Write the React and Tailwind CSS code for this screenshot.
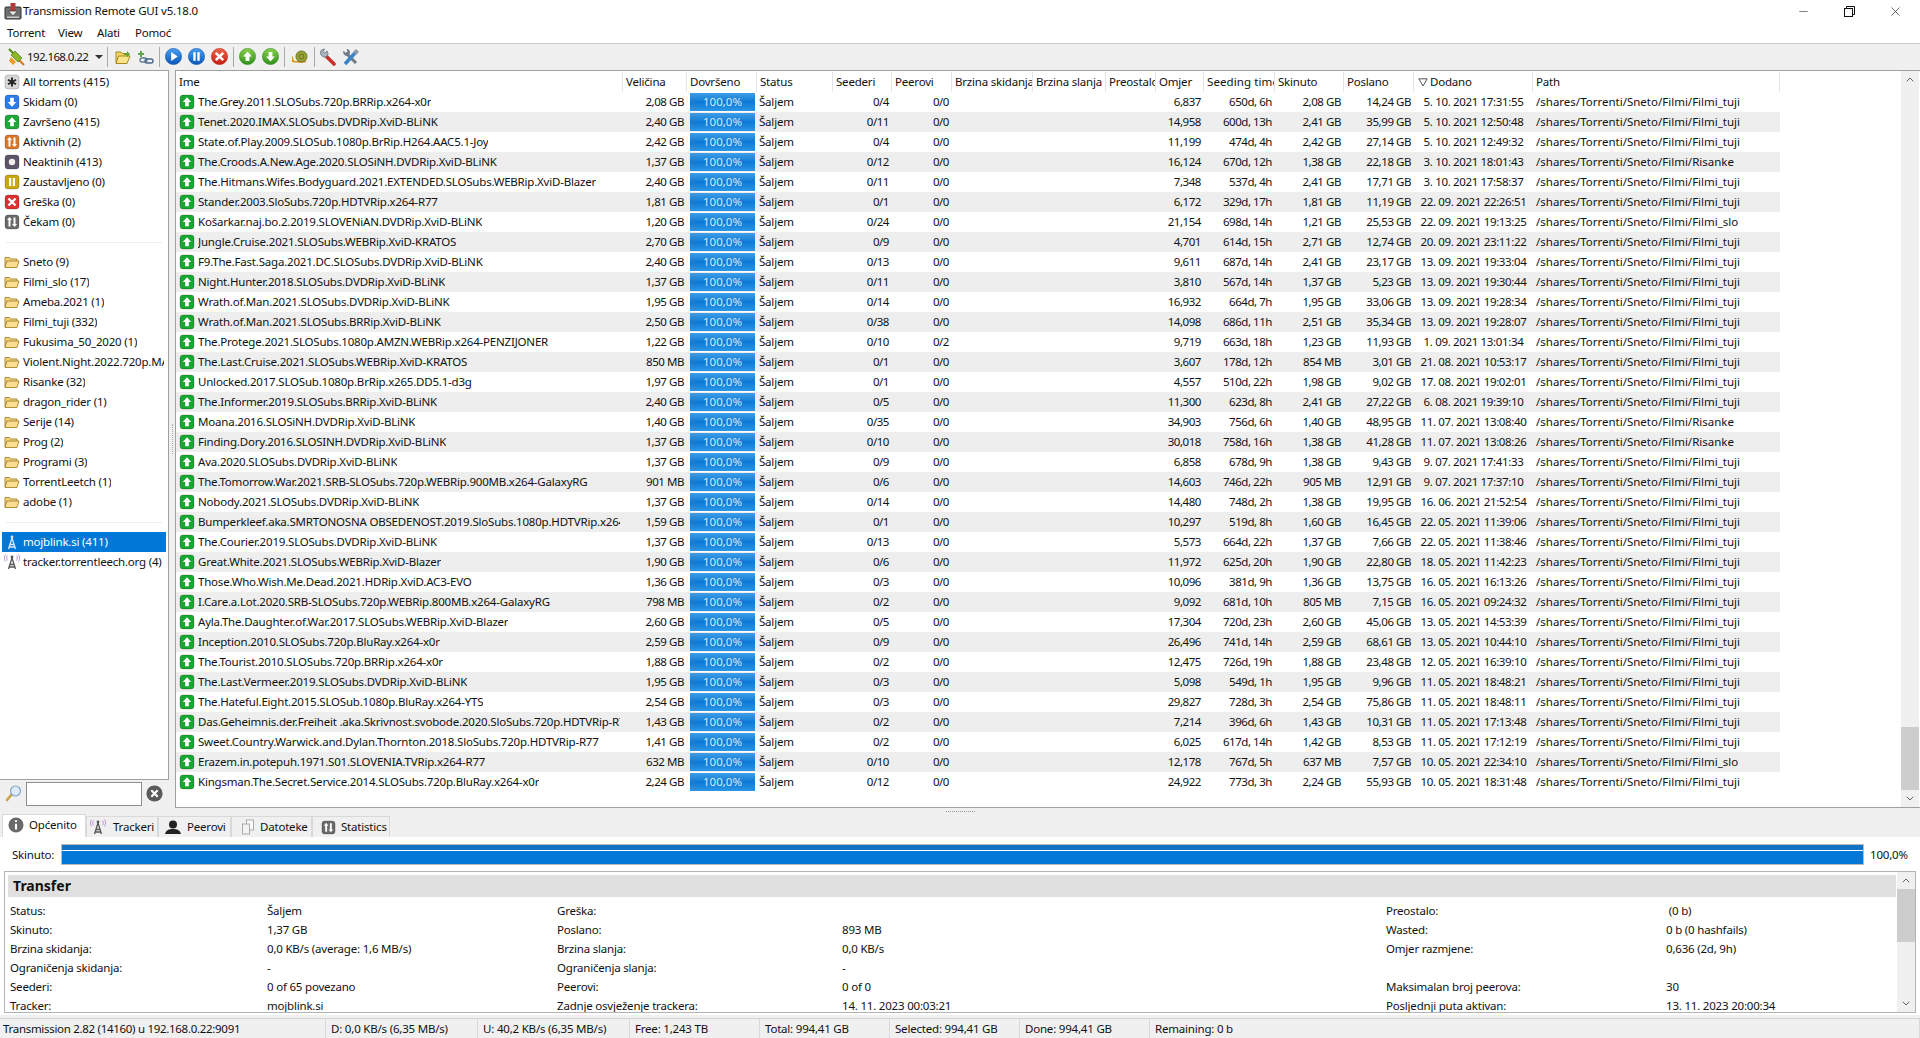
import { Minus, X, ChevronUp, ChevronDown } from "lucide-react";

const T = "/shares/Torrenti/Sneto/Filmi/Filmi_tuji";
const R = "/shares/Torrenti/Sneto/Filmi/Risanke";
const S = "/shares/Torrenti/Sneto/Filmi/Filmi_slo";

const torrents = [
    ["The.Grey.2011.SLOSubs.720p.BRRip.x264-x0r", "2,08 GB", "0/4", "0/0", "6,837", "650d, 6h", "2,08 GB", "14,24 GB", "5. 10. 2021 17:31:55", T],
    ["Tenet.2020.IMAX.SLOSubs.DVDRip.XviD-BLiNK", "2,40 GB", "0/11", "0/0", "14,958", "600d, 13h", "2,41 GB", "35,99 GB", "5. 10. 2021 12:50:48", T],
    ["State.of.Play.2009.SLOSub.1080p.BrRip.H264.AAC5.1-Joy", "2,42 GB", "0/4", "0/0", "11,199", "474d, 4h", "2,42 GB", "27,14 GB", "5. 10. 2021 12:49:32", T],
    ["The.Croods.A.New.Age.2020.SLOSiNH.DVDRip.XviD-BLiNK", "1,37 GB", "0/12", "0/0", "16,124", "670d, 12h", "1,38 GB", "22,18 GB", "3. 10. 2021 18:01:43", R],
    ["The.Hitmans.Wifes.Bodyguard.2021.EXTENDED.SLOSubs.WEBRip.XviD-Blazer", "2,40 GB", "0/11", "0/0", "7,348", "537d, 4h", "2,41 GB", "17,71 GB", "3. 10. 2021 17:58:37", T],
    ["Stander.2003.SloSubs.720p.HDTVRip.x264-R77", "1,81 GB", "0/1", "0/0", "6,172", "329d, 17h", "1,81 GB", "11,19 GB", "22. 09. 2021 22:26:51", T],
    ["Košarkar.naj.bo.2.2019.SLOVENiAN.DVDRip.XviD-BLiNK", "1,20 GB", "0/24", "0/0", "21,154", "698d, 14h", "1,21 GB", "25,53 GB", "22. 09. 2021 19:13:25", S],
    ["Jungle.Cruise.2021.SLOSubs.WEBRip.XviD-KRATOS", "2,70 GB", "0/9", "0/0", "4,701", "614d, 15h", "2,71 GB", "12,74 GB", "20. 09. 2021 23:11:22", T],
    ["F9.The.Fast.Saga.2021.DC.SLOSubs.DVDRip.XviD-BLiNK", "2,40 GB", "0/13", "0/0", "9,611", "687d, 14h", "2,41 GB", "23,17 GB", "13. 09. 2021 19:33:04", T],
    ["Night.Hunter.2018.SLOSubs.DVDRip.XviD-BLiNK", "1,37 GB", "0/11", "0/0", "3,810", "567d, 14h", "1,37 GB", "5,23 GB", "13. 09. 2021 19:30:44", T],
    ["Wrath.of.Man.2021.SLOSubs.DVDRip.XviD-BLiNK", "1,95 GB", "0/14", "0/0", "16,932", "664d, 7h", "1,95 GB", "33,06 GB", "13. 09. 2021 19:28:34", T],
    ["Wrath.of.Man.2021.SLOSubs.BRRip.XviD-BLiNK", "2,50 GB", "0/38", "0/0", "14,098", "686d, 11h", "2,51 GB", "35,34 GB", "13. 09. 2021 19:28:07", T],
    ["The.Protege.2021.SLOSubs.1080p.AMZN.WEBRip.x264-PENZIJONER", "1,22 GB", "0/10", "0/2", "9,719", "663d, 18h", "1,23 GB", "11,93 GB", "1. 09. 2021 13:01:34", T],
    ["The.Last.Cruise.2021.SLOSubs.WEBRip.XviD-KRATOS", "850 MB", "0/1", "0/0", "3,607", "178d, 12h", "854 MB", "3,01 GB", "21. 08. 2021 10:53:17", T],
    ["Unlocked.2017.SLOSub.1080p.BrRip.x265.DD5.1-d3g", "1,97 GB", "0/1", "0/0", "4,557", "510d, 22h", "1,98 GB", "9,02 GB", "17. 08. 2021 19:02:01", T],
    ["The.Informer.2019.SLOSubs.BRRip.XviD-BLiNK", "2,40 GB", "0/5", "0/0", "11,300", "623d, 8h", "2,41 GB", "27,22 GB", "6. 08. 2021 19:39:10", T],
    ["Moana.2016.SLOSiNH.DVDRip.XviD-BLiNK", "1,40 GB", "0/35", "0/0", "34,903", "756d, 6h", "1,40 GB", "48,95 GB", "11. 07. 2021 13:08:40", R],
    ["Finding.Dory.2016.SLOSINH.DVDRip.XviD-BLiNK", "1,37 GB", "0/10", "0/0", "30,018", "758d, 16h", "1,38 GB", "41,28 GB", "11. 07. 2021 13:08:26", R],
    ["Ava.2020.SLOSubs.DVDRip.XviD-BLiNK", "1,37 GB", "0/9", "0/0", "6,858", "678d, 9h", "1,38 GB", "9,43 GB", "9. 07. 2021 17:41:33", T],
    ["The.Tomorrow.War.2021.SRB-SLOSubs.720p.WEBRip.900MB.x264-GalaxyRG", "901 MB", "0/6", "0/0", "14,603", "746d, 22h", "905 MB", "12,91 GB", "9. 07. 2021 17:37:10", T],
    ["Nobody.2021.SLOSubs.DVDRip.XviD-BLiNK", "1,37 GB", "0/14", "0/0", "14,480", "748d, 2h", "1,38 GB", "19,95 GB", "16. 06. 2021 21:52:54", T],
    ["Bumperkleef.aka.SMRTONOSNA OBSEDENOST.2019.SloSubs.1080p.HDTVRip.x264-R77", "1,59 GB", "0/1", "0/0", "10,297", "519d, 8h", "1,60 GB", "16,45 GB", "22. 05. 2021 11:39:06", T],
    ["The.Courier.2019.SLOSubs.DVDRip.XviD-BLiNK", "1,37 GB", "0/13", "0/0", "5,573", "664d, 22h", "1,37 GB", "7,66 GB", "22. 05. 2021 11:38:46", T],
    ["Great.White.2021.SLOSubs.WEBRip.XviD-Blazer", "1,90 GB", "0/6", "0/0", "11,972", "625d, 20h", "1,90 GB", "22,80 GB", "18. 05. 2021 11:42:23", T],
    ["Those.Who.Wish.Me.Dead.2021.HDRip.XviD.AC3-EVO", "1,36 GB", "0/3", "0/0", "10,096", "381d, 9h", "1,36 GB", "13,75 GB", "16. 05. 2021 16:13:26", T],
    ["I.Care.a.Lot.2020.SRB-SLOSubs.720p.WEBRip.800MB.x264-GalaxyRG", "798 MB", "0/2", "0/0", "9,092", "681d, 10h", "805 MB", "7,15 GB", "16. 05. 2021 09:24:32", T],
    ["Ayla.The.Daughter.of.War.2017.SLOSubs.WEBRip.XviD-Blazer", "2,60 GB", "0/5", "0/0", "17,304", "720d, 23h", "2,60 GB", "45,06 GB", "13. 05. 2021 14:53:39", T],
    ["Inception.2010.SLOSubs.720p.BluRay.x264-x0r", "2,59 GB", "0/9", "0/0", "26,496", "741d, 14h", "2,59 GB", "68,61 GB", "13. 05. 2021 10:44:10", T],
    ["The.Tourist.2010.SLOSubs.720p.BRRip.x264-x0r", "1,88 GB", "0/2", "0/0", "12,475", "726d, 19h", "1,88 GB", "23,48 GB", "12. 05. 2021 16:39:10", T],
    ["The.Last.Vermeer.2019.SLOSubs.DVDRip.XviD-BLiNK", "1,95 GB", "0/3", "0/0", "5,098", "549d, 1h", "1,95 GB", "9,96 GB", "11. 05. 2021 18:48:21", T],
    ["The.Hateful.Eight.2015.SLOSub.1080p.BluRay.x264-YTS", "2,54 GB", "0/3", "0/0", "29,827", "728d, 3h", "2,54 GB", "75,86 GB", "11. 05. 2021 18:48:11", T],
    ["Das.Geheimnis.der.Freiheit .aka.Skrivnost.svobode.2020.SloSubs.720p.HDTVRip-R77", "1,43 GB", "0/2", "0/0", "7,214", "396d, 6h", "1,43 GB", "10,31 GB", "11. 05. 2021 17:13:48", T],
    ["Sweet.Country.Warwick.and.Dylan.Thornton.2018.SloSubs.720p.HDTVRip-R77", "1,41 GB", "0/2", "0/0", "6,025", "617d, 14h", "1,42 GB", "8,53 GB", "11. 05. 2021 17:12:19", T],
    ["Erazem.in.potepuh.1971.S01.SLOVENIA.TVRip.x264-R77", "632 MB", "0/10", "0/0", "12,178", "767d, 5h", "637 MB", "7,57 GB", "10. 05. 2021 22:34:10", S],
    ["Kingsman.The.Secret.Service.2014.SLOSubs.720p.BluRay.x264-x0r", "2,24 GB", "0/12", "0/0", "24,922", "773d, 3h", "2,24 GB", "55,93 GB", "10. 05. 2021 18:31:48", T],
];

const columns = [
    ["Ime", "w-[447px]"],
    ["Veličina", "w-[64px]"],
    ["Dovršeno", "w-[70px]"],
    ["Status", "w-[76px]"],
    ["Seederi", "w-[59px]"],
    ["Peerovi", "w-[60px]"],
    ["Brzina skidanja", "w-[81px]"],
    ["Brzina slanja", "w-[73px]"],
    ["Preostalo", "w-[50px]"],
    ["Omjer", "w-[48px]"],
    ["Seeding time", "w-[71px] tracking-[0.1px]"],
    ["Skinuto", "w-[69px]"],
    ["Poslano", "w-[70px]"],
    ["Dodano", "w-[119px]"],
    ["Path", "w-[247px]"],
];

const states = [
    ["All torrents (415)", "#d8d8d8", "all"],
    ["Skidam (0)", "#2b7de9", "down"],
    ["Završeno (415)", "#1fa83a", "up"],
    ["Aktivnih (2)", "#d9772b", "both"],
    ["Neaktinih (413)", "#5c5468", "dot"],
    ["Zaustavljeno (0)", "#c9a80e", "pause"],
    ["Greška (0)", "#dd3030", "x"],
    ["Čekam (0)", "#6a6a6a", "both"],
];

const folders = ["Sneto (9)", "Filmi_slo (17)", "Ameba.2021 (1)", "Filmi_tuji (332)", "Fukusima_50_2020 (1)", "Violent.Night.2022.720p.MAX.WEB-DL (1)", "Risanke (32)", "dragon_rider (1)", "Serije (14)", "Prog (2)", "Programi (3)", "TorrentLeetch (1)", "adobe (1)"];

const details = [
    ["Status:", "Šaljem", "Greška:", "", "Preostalo:", " (0 b)"],
    ["Skinuto:", "1,37 GB", "Poslano:", "893 MB", "Wasted:", "0 b (0 hashfails)"],
    ["Brzina skidanja:", "0,0 KB/s (average: 1,6 MB/s)", "Brzina slanja:", "0,0 KB/s", "Omjer razmjene:", "0,636 (2d, 9h)"],
    ["Ograničenja skidanja:", "-", "Ograničenja slanja:", "-", "", ""],
    ["Seederi:", "0 of 65 povezano", "Peerovi:", "0 of 0", "Maksimalan broj peerova:", "30"],
    ["Tracker:", "mojblink.si", "Zadnje osvježenje trackera:", "14. 11. 2023 00:03:21", "Posljednji puta aktivan:", "13. 11. 2023 20:00:34"],
];

const statusCells = [
    ["Transmission 2.82 (14160) u 192.168.0.22:9091", "w-[326px] pl-[3px] tracking-[-0.3px]"],
    ["D: 0,0 KB/s (6,35 MB/s)", "w-[152px] pl-[5px]"],
    ["U: 40,2 KB/s (6,35 MB/s)", "w-[152px] pl-[5px]"],
    ["Free: 1,243 TB", "w-[130px] pl-[5px]"],
    ["Total: 994,41 GB", "w-[130px] pl-[5px]"],
    ["Selected: 994,41 GB", "w-[130px] pl-[5px]"],
    ["Done: 994,41 GB", "w-[130px] pl-[5px]"],
    ["Remaining: 0 b", "flex-1 pl-[5px]"],
];

function Glyph({ kind }) {
    if (kind === "up") return <path d="M8 3.2 12.2 8H9.8v4.2H6.2V8H3.8z" fill="#fff" />;
    if (kind === "down") return <path d="M8 12.8 3.8 8h2.4V3.8h3.6V8h2.4z" fill="#fff" />;
    if (kind === "both") return <path d="M5.5 3 8 6H6.5v6.5h-2V6H3zM10.5 13 8 10h1.5V3.5h2V10H13z" fill="#fff" />;
    if (kind === "dot") return <circle cx="8" cy="8" r="3.2" fill="#eee" />;
    if (kind === "pause") return <path d="M5 4h2.2v8H5zM8.8 4H11v8H8.8z" fill="#fff" />;
    if (kind === "x") return <path d="M4.5 4.5 11.5 11.5M11.5 4.5 4.5 11.5" stroke="#fff" strokeWidth="2.4" />;
    return <path d="M8 3.5v9M4 5.7l8 4.6M12 5.7l-8 4.6" stroke="#222" strokeWidth="1.9" />;
}

function StateIcon({ color, kind, size = 16 }) {
    return (
        <svg width={size} height={size} viewBox="0 0 16 16" className="shrink-0">
            <rect x="1" y="1" width="14" height="14" rx="3" fill={color} stroke="#00000030" />
            <Glyph kind={kind} />
        </svg>
    );
}

function RoundIcon({ color, dark, kind }) {
    const id = "g" + color.slice(1);
    return (
        <svg width="17" height="17" viewBox="0 0 16 16" className="shrink-0">
            <defs>
                <linearGradient id={id} x1="0" y1="0" x2="0" y2="1">
                    <stop offset="0" stopColor={color} />
                    <stop offset="1" stopColor={dark} />
                </linearGradient>
            </defs>
            <circle cx="8" cy="8" r="7.6" fill={`url(#${id})`} stroke={dark} strokeWidth="0.6" />
            {kind === "play" && <path d="M5.8 3.8 12 8l-6.2 4.2z" fill="#fff" />}
            {kind !== "play" && <Glyph kind={kind} />}
        </svg>
    );
}

function Folder() {
    return (
        <svg width="16" height="14" viewBox="0 0 16 14" className="shrink-0">
            <path d="M1 12V2.5h4.5l1.2 1.5H13v2" fill="#f3d27c" stroke="#a5842f" strokeWidth="0.9" />
            <path d="M1 12.5 3 6h12l-2 6.5z" fill="#fadf92" stroke="#a5842f" strokeWidth="0.9" strokeLinejoin="round" />
        </svg>
    );
}

function Tower({ dark, waves }) {
    const c = dark ? "#d8e6f5" : "#555";
    return (
        <svg width="16" height="16" viewBox="0 0 16 16" className="shrink-0">
            <path d="M8 4 4.5 15M8 4l3.5 11M6 10.5h4M5.2 13h5.6" stroke={c} strokeWidth="1.3" fill="none" />
            <circle cx="8" cy="3" r="1.4" fill={c} />
            {waves && <path d="M3.5 1.5C2.5 3 2.5 5 3.5 6.5M12.5 1.5c1 1.5 1 3.5 0 5M1.5 .5C0 2.5 0 5.5 1.5 7.5M14.5 .5c1.5 2 1.5 5 0 7" stroke="#b48ad0" fill="none" strokeWidth="0.9" />}
        </svg>
    );
}

function AppIcon() {
    return (
        <svg width="18" height="18" viewBox="0 0 18 18" className="shrink-0">
            <rect x="1" y="5" width="16" height="12" rx="1" fill="#6f6f6f" stroke="#333" />
            <rect x="6.5" y="1" width="5" height="9" fill="#b03a3a" />
            <path d="M4.5 9 9 14l4.5-5z" fill="#e8e8e8" stroke="#333" strokeWidth="0.7" />
            <rect x="3" y="14.5" width="12" height="1.5" fill="#ccc" />
        </svg>
    );
}

function Sep() {
    return <div className="w-px h-[20px] bg-[#a9a9a9] shrink-0" />;
}

function Toolbar() {
    return (
        <div className="h-[27px] flex items-center bg-[#f0f0f0] border-t border-[#c8c8c8] pl-2 pb-[1px] shrink-0">
            <svg width="17" height="18" viewBox="0 0 17 18" className="shrink-0">
                <path d="M1 1 6 6" stroke="#4f8a14" strokeWidth="2" />
                <path d="M16 17l-5-5" stroke="#d8741a" strokeWidth="2" />
                <path d="M3 7l4-4 7 7-4 4z" fill="#8fb52a" stroke="#4f7a10" strokeWidth="0.7" />
                <path d="M3 9l5 5-3 3-4-4z" fill="#ee9d24" />
            </svg>
            <span className="ml-[2px] w-[68px] tracking-[-0.6px]">192.168.0.22</span>
            <span className="w-0 h-0 border-x-[4px] border-x-transparent border-t-[4px] border-t-[#333]" />
            <div className="ml-[4px] mr-[7px]"><Sep /></div>
            <svg width="16" height="16" viewBox="0 0 16 16" className="shrink-0">
                <path d="M1 14V3h5l1.2 1.5H12V7" fill="#f5d468" stroke="#a8871e" />
                <path d="M1 14.5 3.5 7H15l-3 7.5z" fill="#fbe58c" stroke="#a8871e" strokeLinejoin="round" />
                <path d="M9 4.5h3V2l3 3.2-3 3V6H9z" fill="#58a82c" />
            </svg>
            <svg width="17" height="16" viewBox="0 0 17 16" className="ml-[6px] shrink-0">
                <path d="M4 2v6M1 5h6" stroke="#5fa34a" strokeWidth="2" />
                <rect x="3" y="9" width="7" height="4" rx="2" fill="none" stroke="#5e7c99" strokeWidth="1.4" />
                <rect x="8" y="10" width="8" height="4" rx="2" fill="none" stroke="#4a6886" strokeWidth="1.4" />
            </svg>
            <div className="mx-[5px]"><Sep /></div>
            <RoundIcon color="#4aa0f0" dark="#0b55b8" kind="play" />
            <div className="w-[6px]" />
            <RoundIcon color="#4aa0f0" dark="#0b55b8" kind="pause" />
            <div className="w-[6px]" />
            <RoundIcon color="#f0644c" dark="#c41f12" kind="x" />
            <div className="mx-[5px]"><Sep /></div>
            <RoundIcon color="#8ad04c" dark="#2f8f1c" kind="up" />
            <div className="w-[6px]" />
            <RoundIcon color="#8ad04c" dark="#2f8f1c" kind="down" />
            <div className="mx-[5px]"><Sep /></div>
            <svg width="18" height="14" viewBox="0 0 18 14" className="ml-[1px] shrink-0">
                <path d="M1 12c3 1 12 1 15 0-1-1-1-1-2-1H4C3 11 2 9 2 7L1 6z" fill="#e0912c" />
                <circle cx="10.5" cy="6.5" r="5.5" fill="#9aa33a" stroke="#66701c" />
                <circle cx="10.5" cy="6.5" r="2.4" fill="none" stroke="#66701c" />
            </svg>
            <div className="ml-[5px] mr-[4px]"><Sep /></div>
            <svg width="17" height="18" viewBox="0 0 17 18" className="shrink-0">
                <path d="M7 8 15 16" stroke="#c8302a" strokeWidth="3.6" strokeLinecap="round" />
                <path d="M2 2.5a4.4 4.4 0 0 0 6 6A4.4 4.4 0 0 0 8 3L5.8 5 4 3.4 5.8 1.2A4.4 4.4 0 0 0 2 2.5z" fill="#aab6c0" stroke="#56626e" strokeWidth="0.7" />
            </svg>
            <svg width="18" height="18" viewBox="0 0 18 18" className="ml-[6px] shrink-0">
                <path d="M14 15 5 6" stroke="#6f7a86" strokeWidth="3" />
                <path d="M1.5 2.5a3.8 3.8 0 0 0 5 5L8 5A3.8 3.8 0 0 0 4.5 1L5.5 3.8 3.4 4.8z" fill="#6f7a86" />
                <path d="M3 16 13 5" stroke="#3b84c8" strokeWidth="3.6" />
                <path d="M14 1l3 3-3 3-3-3z" fill="#8b98a4" />
            </svg>
        </div>
    );
}

function Sidebar() {
    return (
        <div className="w-[169px] shrink-0 flex flex-col">
            <div className="h-[710px] bg-white border border-[#a0a0a0] border-l-0 pt-[1px] overflow-hidden">
                {states.map(([label, color, kind]) => (
                    <div key={label} className="h-[20px] flex items-center pl-[4px] gap-[3px]">
                        <StateIcon color={color} kind={kind} />
                        <span className="whitespace-nowrap">{label}</span>
                    </div>
                ))}
                <div className="h-[20px] flex items-center px-[6px]"><div className="h-px w-full bg-[#eeeeee]" /></div>
                {folders.map((label) => (
                    <div key={label} className="h-[20px] flex items-center pl-[4px] pr-[4px] gap-[3px]">
                        <Folder />
                        <span className="whitespace-nowrap overflow-hidden">{label}</span>
                    </div>
                ))}
                <div className="h-[20px] flex items-center px-[6px]"><div className="h-px w-full bg-[#eeeeee]" /></div>
                <div className="h-[20px] mx-[2px] flex items-center pl-[2px] gap-[3px] bg-[#0078d7] text-white">
                    <Tower dark />
                    <span>mojblink.si (411)</span>
                </div>
                <div className="h-[20px] flex items-center pl-[4px] gap-[3px]">
                    <Tower waves />
                    <span className="whitespace-nowrap">tracker.torrentleech.org (4)</span>
                </div>
            </div>
            <div className="flex items-center h-[28px] pl-[5px] pb-[1px]">
                <svg width="17" height="17" viewBox="0 0 17 17" className="shrink-0">
                    <path d="M2 15 7 9" stroke="#c9a04c" strokeWidth="2.6" strokeLinecap="round" />
                    <circle cx="10.5" cy="6" r="5" fill="#dcebfa" stroke="#8aa6c4" strokeWidth="1.2" />
                </svg>
                <div className="ml-[4px] w-[116px] h-[24px] bg-white border border-[#8e8e8e]" />
                <svg width="17" height="17" viewBox="0 0 16 16" className="ml-[4px] shrink-0">
                    <circle cx="8" cy="8" r="7.6" fill="#5a5a5a" />
                    <path d="M5 5l6 6M11 5l-6 6" stroke="#fff" strokeWidth="2" />
                </svg>
            </div>
        </div>
    );
}

function TorrentRow({ t, odd }) {
    const num = "text-right pr-[3px] shrink-0 tracking-[-0.45px]";
    return (
        <div className={`h-[20px] flex items-center whitespace-nowrap ${odd ? "bg-[#eeeeee]" : ""}`}>
            <div className="w-[447px] shrink-0 flex items-center pl-[3px] pr-[3px]">
                <StateIcon color="#17a832" kind="up" />
                <span className="ml-[3px] overflow-hidden">{t[0]}</span>
            </div>
            <div className={`w-[64px] ${num}`}>{t[1]}</div>
            <div className="w-[70px] shrink-0 pl-[3px] pr-[2px] h-[18px]">
                <div className="h-full flex items-center justify-center tracking-[0px] text-[#d6eafb] bg-linear-to-b from-[#3d9fe8] via-[#0b7ad6] to-[#2b95e6]">100,0%</div>
            </div>
            <div className="w-[76px] shrink-0 pl-[2px]">Šaljem</div>
            <div className={`w-[59px] ${num}`}>{t[2]}</div>
            <div className={`w-[60px] ${num}`}>{t[3]}</div>
            <div className="w-[204px] shrink-0" />
            <div className={`w-[48px] ${num}`}>{t[4]}</div>
            <div className={`w-[71px] ${num}`}>{t[5]}</div>
            <div className={`w-[69px] ${num}`}>{t[6]}</div>
            <div className={`w-[70px] ${num}`}>{t[7]}</div>
            <div className="w-[119px] shrink-0 text-center tracking-[-0.35px]">{t[8]}</div>
            <div className="w-[247px] shrink-0 pl-[3px] tracking-[0px]">{t[9]}</div>
        </div>
    );
}

function TorrentList() {
    return (
        <div className="flex-1 flex bg-white border border-[#a0a0a0] border-r-0 h-[738px] overflow-hidden">
            <div className="w-[1725px] shrink-0">
                <div className="w-[1604px] h-[21px] flex pt-[1px] whitespace-nowrap">
                    {columns.map(([label, w]) => (
                        <div key={label} className={`${w} shrink-0 pl-[3px] overflow-hidden border-r border-[#e5e5e5] flex items-center`}>
                            {label === "Dodano" && (
                                <svg width="10" height="9" viewBox="0 0 10 9" fill="none" stroke="#555" className="mr-[2px] ml-[1px] shrink-0">
                                    <path d="M.8.8h8.4L5 8z" />
                                </svg>
                            )}
                            {label}
                        </div>
                    ))}
                </div>
                <div className="w-[1604px]">
                    {torrents.map((t, i) => <TorrentRow key={t[0]} t={t} odd={i % 2 === 1} />)}
                </div>
            </div>
            <Scrollbar before="flex-1" thumbH="h-[63px]" after="h-0" />
        </div>
    );
}

function Scrollbar({ before, thumbH, after }) {
    return (
        <div className="w-[18px] shrink-0 bg-[#f0f0f0] flex flex-col items-center">
            <ChevronUp className="h-[17px] w-[12px] text-[#606060] shrink-0" strokeWidth={2} />
            <div className={before} />
            <div className={`w-full bg-[#cdcdcd] ${thumbH}`} />
            <div className={after} />
            <ChevronDown className="h-[17px] w-[12px] text-[#606060] shrink-0" strokeWidth={2} />
        </div>
    );
}

function Tabs() {
    const tab = "h-[21px] flex items-center border border-[#d9d9d9] border-b-0 bg-[#f0f0f0] shrink-0";
    return (
        <div className="shrink-0 bg-[#f0f0f0]">
            <div className="h-[6px] pt-[3px] pl-[946px]">
                <div className="w-[29px] border-t border-dotted border-[#999]" />
            </div>
            <div className="h-[23px] flex items-end pl-[2px]">
                <div className="w-[84px] h-[23px] flex items-center gap-[5px] bg-white border border-[#d9d9d9] border-b-0 pl-[5px] shrink-0 pb-[3px]">
                    <svg width="16" height="16" viewBox="0 0 14 14" className="shrink-0">
                        <circle cx="7" cy="7" r="6.6" fill="#6b6b6b" />
                        <path d="M7 2.8v1.6M7 6v5" stroke="#fff" strokeWidth="1.8" />
                    </svg>
                    Općenito
                </div>
                <div className={`${tab} w-[72px] pl-[3px] gap-[7px]`}><Tower waves />Trackeri</div>
                <div className={`${tab} w-[73px] pl-[6px] gap-[6px]`}>
                    <svg width="16" height="14" viewBox="0 0 16 14" className="shrink-0">
                        <circle cx="8" cy="4.5" r="4" fill="#222" />
                        <path d="M0 14c1-4 4-5 8-5s7 1 8 5z" fill="#222" />
                    </svg>
                    Peerovi
                </div>
                <div className={`${tab} w-[81px] pl-[8px] gap-[4px]`}>
                    <svg width="16" height="16" viewBox="0 0 16 16" className="shrink-0">
                        <rect x="6.5" y="1" width="7" height="10" fill="#fafafa" stroke="#aaa" />
                        <rect x="2.5" y="5" width="7" height="10" fill="#f2f2f2" stroke="#aaa" />
                    </svg>
                    Datoteke
                </div>
                <div className={`${tab} w-[78px] pl-[8px] gap-[5px]`}>
                    <StateIcon color="#6a6a6a" kind="both" size={15} />
                    Statistics
                </div>
            </div>
        </div>
    );
}

function Details() {
    return (
        <div className="h-[178px] bg-white flex flex-col px-[4px] pt-[7px] shrink-0">
            <div className="h-[21px] flex items-center shrink-0 pr-[1px]">
                <span className="w-[57px] pl-[8px]">Skinuto:</span>
                <div className="w-[1803px] h-[21px] bg-white border border-[#bcbcbc] flex flex-col">
                    <div className="h-[5px] bg-[#0f72c4]" />
                    <div className="h-[1px]" />
                    <div className="flex-1 bg-[#0478d8]" />
                </div>
                <span className="ml-[6px]">100,0%</span>
            </div>
            <div className="mt-[6px] h-[142px] border border-[#b4b4b4] flex overflow-hidden shrink-0 bg-white">
                <div className="flex-1 min-w-0 pt-[3px] pl-[3px] pr-[1px]">
                    <div className="h-[22px] bg-[#e0e0e0] flex items-center pl-[5px] pb-[1px] text-[14px] tracking-[0px] font-bold">Transfer</div>
                    <div className="pt-[4px]">
                        {details.map((d) => (
                            <div key={d[0]} className="h-[19px] flex items-center whitespace-nowrap pl-[2px]">
                                <span className="w-[257px] shrink-0">{d[0]}</span>
                                <span className="w-[290px] shrink-0">{d[1]}</span>
                                <span className="w-[285px] shrink-0">{d[2]}</span>
                                <span className="w-[544px] shrink-0">{d[3]}</span>
                                <span className="w-[280px] shrink-0">{d[4]}</span>
                                <span className="whitespace-pre">{d[5]}</span>
                            </div>
                        ))}
                    </div>
                </div>
                <Scrollbar before="h-0" thumbH="h-[53px]" after="flex-1" />
            </div>
        </div>
    );
}

function StatusBar() {
    return (
        <div className="mt-[3px] h-[20px] flex items-center bg-[#f0f0f0] border-t border-[#d4d4d4] shrink-0">
            {statusCells.map(([label, w]) => (
                <div key={label} className={`${w} h-full flex items-center border-r border-[#d9d9d9] whitespace-nowrap`}>{label}</div>
            ))}
        </div>
    );
}

export default function App() {
    return (
        <div className="w-[1920px] h-[1038px] flex flex-col overflow-hidden bg-[#f0f0f0] text-[11.5px] tracking-[-0.2px] leading-[16px] text-[#111] font-['Noto_Sans',sans-serif]">
            <div className="h-[22px] bg-white flex items-center pl-[4px] shrink-0">
                <AppIcon />
                <span className="ml-[1px]">Transmission Remote GUI v5.18.0</span>
                <div className="ml-auto flex items-center pr-[2px]">
                    <div className="w-[46px] flex justify-center"><Minus className="w-[13px] h-[13px]" strokeWidth={1} /></div>
                    <div className="w-[46px] flex justify-center">
                        <svg width="11" height="11" viewBox="0 0 11 11" fill="none" stroke="#111">
                            <rect x="0.5" y="2.5" width="8" height="8" />
                            <path d="M2.5 2.5v-2h8v8h-2" />
                        </svg>
                    </div>
                    <div className="w-[46px] flex justify-center"><X className="w-[15px] h-[15px]" strokeWidth={1} /></div>
                </div>
            </div>
            <div className="h-[21px] bg-white flex items-center pl-[7px] shrink-0">
                <span className="w-[51px]">Torrent</span>
                <span className="w-[39px]">View</span>
                <span className="w-[38px]">Alati</span>
                <span>Pomoć</span>
            </div>
            <Toolbar />
            <div className="flex shrink-0">
                <Sidebar />
                <div className="w-[6px] shrink-0 flex items-center justify-center">
                    <div className="h-[30px] border-l border-dotted border-[#aaa]" />
                </div>
                <TorrentList />
            </div>
            <Tabs />
            <Details />
            <StatusBar />
        </div>
    );
}
